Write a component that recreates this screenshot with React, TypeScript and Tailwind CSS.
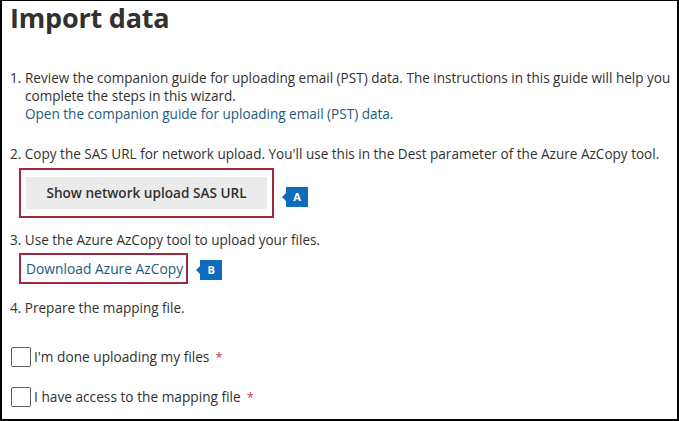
import React from "react";

const textColor = "text-[#323130]";

function Badge({ letter }: { letter: string }) {
  return (
    <div className="relative ml-[12px] flex h-[20px] w-[22px] items-center justify-center bg-[#0f6cbd] text-[11px] font-bold text-white">
      <span className="absolute left-[-4px] top-[6px] h-0 w-0 border-y-[4px] border-r-[4px] border-y-transparent border-r-[#0f6cbd]" />
      {letter}
    </div>
  );
}

function Checkbox({ label }: { label: string }) {
  return (
    <div className="flex h-[20px] items-center">
      <div className="h-[20px] w-[20px] rounded-[2px] border border-[#605e5c] bg-white" />
      <span className="ml-[3px] text-[13.7px] leading-[18px]">{label}</span>
      <span className="ml-[6px] text-[13px] leading-[18px] text-[#c4314b]">*</span>
    </div>
  );
}

export default function App() {
  return (
    <div
      className={`box-border flex h-[421px] w-[679px] flex-col overflow-hidden border-x-2 border-b-2 border-t border-black bg-white pl-[8px] ${textColor}`}
      style={{ fontFamily: '"Open Sans", "Noto Sans", sans-serif' }}
    >
      <h1 className="text-[27px] font-bold leading-[34px] tracking-[-0.2px]">Import data</h1>

      <div className="mt-[34px] text-[13.55px] leading-[18px] whitespace-nowrap">
        <div className="flex">
          <span className="w-[15px]">1.</span>
          <div>
            <div>Review the companion guide for uploading email (PST) data. The instructions in this guide will help you</div>
            <div>complete the steps in this wizard.</div>
            <div className="text-[#1b5a80]">Open the companion guide for uploading email (PST) data.</div>
          </div>
        </div>

        <div className="mt-[22px]">2. Copy the SAS URL for network upload. You'll use this in the Dest parameter of the Azure AzCopy tool.</div>
        <div className="mt-[5px] ml-[9px] flex items-start">
          <div className="border-2 border-[#9e2a3f] px-[5px] py-[7px]">
            <div className="flex h-[32px] w-[241px] items-center justify-center bg-[#ebebeb] text-[13.6px] font-semibold">
              Show network upload SAS URL
            </div>
          </div>
          <div className="mt-[19px]">
            <Badge letter="A" />
          </div>
        </div>

        <div className="mt-[13px]">3. Use the Azure AzCopy tool to upload your files.</div>
        <div className="mt-[4px] ml-[9px] flex items-start">
          <div className="flex h-[31px] items-center border-2 border-[#9e2a3f] pl-[5px] pr-[3px] text-[13.8px] text-[#1b5a80]">
            Download Azure AzCopy
          </div>
          <div className="mt-[7px]">
            <Badge letter="B" />
          </div>
        </div>

        <div className="mt-[15px]">4. Prepare the mapping file.</div>

        <div className="mt-[30px] ml-[1px]">
          <Checkbox label="I'm done uploading my files" />
        </div>
        <div className="mt-[20px] ml-[1px]">
          <Checkbox label="I have access to the mapping file" />
        </div>
      </div>
    </div>
  );
}
